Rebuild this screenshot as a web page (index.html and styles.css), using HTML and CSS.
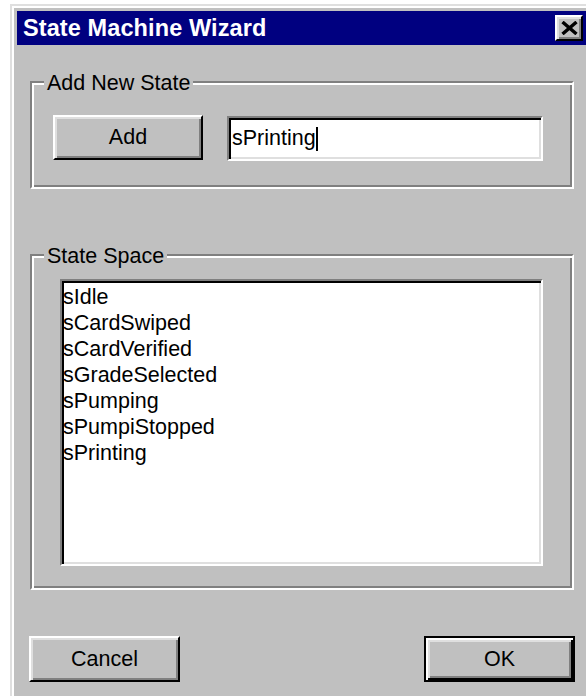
FILE: index.html
```html
<!DOCTYPE html>
<html lang="en">
<head>
<meta charset="utf-8">
<title>State Machine Wizard</title>
<link rel="stylesheet" href="styles.css">
</head>
<body>
  <div class="window">
    <div class="titlebar">
      <span class="title">State Machine Wizard</span>
      <div class="close" aria-label="Close">
        <svg width="17" height="14" viewBox="0 0 17 14">
          <path d="M1.5 1 L15.5 13 M15.5 1 L1.5 13" stroke="#000" stroke-width="3.4" fill="none"/>
        </svg>
      </div>
    </div>
    <div class="client">
      <div class="group group-add">
        <span class="legend">Add New State</span>
        <div class="add-row">
          <div class="btn btn-add">Add</div>
          <div class="field"><span>sPrinting</span><span class="caret"></span></div>
        </div>
      </div>
      <div class="group group-states">
        <span class="legend">State Space</span>
        <ul class="listbox">
          <li>sIdle</li>
          <li>sCardSwiped</li>
          <li>sCardVerified</li>
          <li>sGradeSelected</li>
          <li>sPumping</li>
          <li>sPumpiStopped</li>
          <li>sPrinting</li>
        </ul>
      </div>
      <div class="actions">
        <div class="btn btn-action">Cancel</div>
        <div class="btn btn-action btn-default">OK</div>
      </div>
    </div>
  </div>
</body>
</html>
```
FILE: styles.css
```css
html, body {
  margin: 0;
  height: 100%;
  overflow: hidden;
  background: #fff;
}

body {
  font-family: "Liberation Sans", Arial, sans-serif;
  font-size: 21.5px;
  color: #000;
}

/* dialog frame: raised double bevel */
.window {
  box-sizing: border-box;
  width: 584px;
  height: 720px;
  margin: 4px 0 0 10px;
  padding: 5px;
  background: #c0c0c0;
  border: 2px solid;
  border-color: #dfdfdf #000 #000 #dfdfdf;
  box-shadow: inset 2px 2px #fff, inset -2px -2px #808080;
}

.titlebar {
  height: 34px;
  background: #000080;
  display: flex;
  align-items: center;
  justify-content: space-between;
  padding: 0 4px 0 6px;
}

.title {
  color: #fff;
  font-weight: bold;
  font-size: 23.5px;
  letter-spacing: 0.1px;
}

.close {
  box-sizing: border-box;
  width: 28px;
  height: 26px;
  background: #c0c0c0;
  border: 2px solid;
  border-color: #fff #000 #000 #fff;
  box-shadow: inset 2px 2px #dfdfdf, inset -2px -2px #808080;
  display: flex;
  align-items: center;
  justify-content: center;
}

.client {
  padding: 36px 12px 0;
}

/* etched group box */
.group {
  position: relative;
  box-sizing: border-box;
  margin: 0 1px;
  border: 2px solid;
  border-color: #808080 #fff #fff #808080;
  box-shadow: inset 2px 2px #fff, inset -2px -2px #808080;
}

.legend {
  position: absolute;
  top: -13px;
  left: 12px;
  padding: 0 3px;
  line-height: 26px;
  background: #c0c0c0;
}

.group-add {
  height: 108px;
  padding: 32px 0 0 21px;
}

.add-row {
  display: flex;
  gap: 24px;
}

/* raised push button */
.btn {
  box-sizing: border-box;
  background: #c0c0c0;
  border: 2px solid;
  border-color: #fff #000 #000 #fff;
  box-shadow: inset 2px 2px #dfdfdf, inset -2px -2px #808080;
  display: flex;
  align-items: center;
  justify-content: center;
}

.btn-add {
  width: 150px;
  height: 45px;
}

/* sunken edit control */
.field {
  box-sizing: border-box;
  width: 316px;
  height: 45px;
  margin-top: 1px;
  padding-left: 3px;
  background: #fff;
  border: 2px solid;
  border-color: #808080 #fff #fff #808080;
  box-shadow: inset 2px 2px #000, inset -2px -2px #dfdfdf;
  display: flex;
  align-items: center;
}

.caret {
  width: 2px;
  height: 24px;
  background: #000;
}

.group-states {
  height: 336px;
  margin-top: 65px;
  padding: 23px 0 0 28px;
}

.listbox {
  box-sizing: border-box;
  width: 483px;
  height: 287px;
  margin: 0;
  padding: 3px 0 0 1px;
  list-style: none;
  background: #fff;
  border: 2px solid;
  border-color: #808080 #fff #fff #808080;
  box-shadow: inset 2px 2px #000, inset -2px -2px #dfdfdf;
}

.listbox li {
  line-height: 26px;
  height: 26px;
}

.actions {
  display: flex;
  justify-content: space-between;
  margin-top: 46px;
}

.btn-action {
  width: 151px;
  height: 46px;
}

.btn-default {
  border-color: #000;
  box-shadow: inset 2px 2px #fff, inset -2px -2px #000, inset 4px 4px #dfdfdf, inset -4px -4px #808080;
}
```
